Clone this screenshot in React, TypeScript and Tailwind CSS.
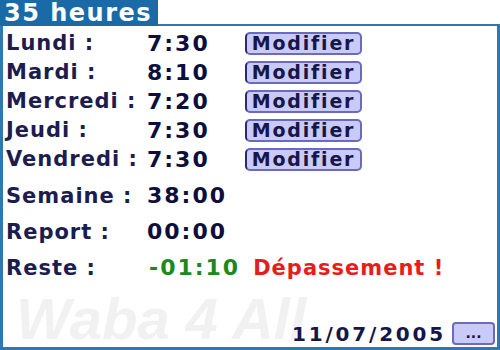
import React from 'react';

const font = { fontFamily: '"DejaVu Sans", Verdana, sans-serif' };

function ModifierButton() {
  return (
    <button className="h-[23px] w-[117px] rounded-[5px] border-2 border-[#6a6ac0] border-l-[#2a2a70] bg-[#cacaf6] text-[19px] font-bold leading-none tracking-[1.8px] text-[#16164a] flex items-center justify-center">
      Modifier
    </button>
  );
}

export default function App() {
  const days = [
    { label: 'Lundi :', time: '7:30' },
    { label: 'Mardi :', time: '8:10' },
    { label: 'Mercredi :', time: '7:20' },
    { label: 'Jeudi :', time: '7:30' },
    { label: 'Vendredi :', time: '7:30' },
  ];

  return (
    <div className="w-[500px] h-[350px] bg-white flex flex-col" style={font}>
      {/* Tab header */}
      <div className="flex h-[26px] shrink-0">
        <div className="w-[158px] bg-[#196aa6] text-white text-[24px] font-bold leading-none tracking-[1.5px] pl-[4px] flex items-center">
          35 heures
        </div>
        <div className="flex-1 border-b-2 border-[#2f78b2]" />
      </div>

      {/* Panel */}
      <div className="relative flex-1 border-l-[3px] border-r-[3px] border-b-[3px] border-[#2f78b2] flex flex-col pl-[3px] pr-[1px] pt-[3px] overflow-hidden">
        {/* Watermark */}
        <div
          className="absolute left-[13px] top-[264px] text-[58px] font-bold italic leading-none text-[#f1f1f1] select-none"
          style={{ fontFamily: '"Liberation Sans", Arial, sans-serif' }}
        >
          Waba 4 All
        </div>

        <div className="relative flex flex-col">
          {days.map((d) => (
            <div key={d.label} className="h-[29px] flex items-center">
              <span className="w-[141px] text-[21px] font-bold tracking-[1px] text-[#1c1c4e] leading-none">{d.label}</span>
              <span className="w-[98px] text-[22px] font-bold tracking-[2px] text-[#0e0e3c] leading-none">{d.time}</span>
              <ModifierButton />
            </div>
          ))}

          <div className="mt-[4px] h-[36px] flex items-center">
            <span className="w-[141px] text-[21px] font-bold tracking-[1px] text-[#1c1c4e] leading-none">Semaine :</span>
            <span className="text-[22px] font-bold tracking-[2px] text-[#0e0e3c] leading-none">38:00</span>
          </div>
          <div className="h-[36px] flex items-center">
            <span className="w-[141px] text-[21px] font-bold tracking-[1px] text-[#1c1c4e] leading-none">Report :</span>
            <span className="text-[22px] font-bold tracking-[2px] text-[#0e0e3c] leading-none">00:00</span>
          </div>
          <div className="h-[36px] flex items-center">
            <span className="w-[143px] text-[21px] font-bold tracking-[1px] text-[#1c1c4e] leading-none">Reste :</span>
            <span className="text-[22px] font-bold tracking-[2px] text-[#1b8a1e] leading-none">-01:10</span>
            <span className="ml-[13px] text-[21px] font-bold tracking-[1px] text-[#e81c1c] leading-none">Dépassement !</span>
          </div>
        </div>

        {/* Footer */}
        <div className="relative mt-auto mb-[2px] flex items-center justify-end gap-[6px] pr-[1px]">
          <span className="text-[20px] font-bold tracking-[2.8px] text-[#16164a] leading-none">11/07/2005</span>
          <button className="h-[23px] w-[43px] rounded-[4px] border-2 border-[#6a6ac0] bg-[#cacaf6] text-[14px] font-bold leading-none text-[#16164a] flex items-end justify-center pb-[3px]">
            ...
          </button>
        </div>
      </div>
    </div>
  );
}
